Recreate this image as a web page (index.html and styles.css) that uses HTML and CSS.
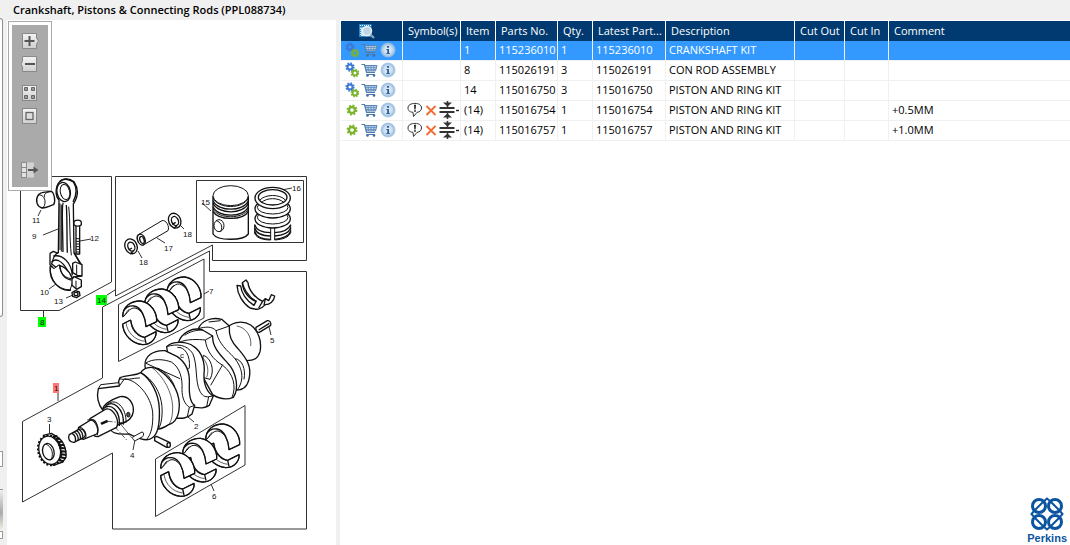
FILE: index.html
```html
<!DOCTYPE html>
<html lang="en">
  <head>
    <meta charset="utf-8">
    <title>Crankshaft, Pistons &amp; Connecting Rods (PPL088734)</title>
    <link rel="stylesheet" href="styles.css">
  </head>
  <body>
    <!-- shared icons -->
    <svg class="defs" width="0" height="0">
      <defs>
        <linearGradient id="key" x1="0" y1="0" x2="0" y2="1">
          <stop offset="0" stop-color="#f4f4f4"/><stop offset="1" stop-color="#cfcfcf"/>
        </linearGradient>
        <radialGradient id="glass">
          <stop offset="0" stop-color="#e4eff8"/><stop offset="0.6" stop-color="#c9def0"/><stop offset="1" stop-color="#8db4da"/>
        </radialGradient>
        <g id="gear">
          <circle r="3" fill="none" stroke-width="2.4"/>
          <circle r="4.6" fill="none" stroke-width="1.8" stroke-dasharray="1.9 1.71"/>
        </g>
        <symbol id="i-gears" viewBox="0 0 14 16">
          <use href="#gear" transform="translate(5 5) scale(0.85)" stroke="#3c78d8"/>
          <use href="#gear" transform="translate(10 11) scale(0.8)" stroke="#7cb32c"/>
        </symbol>
        <symbol id="i-gear" viewBox="0 0 14 16">
          <use href="#gear" transform="translate(7 8)" stroke="#7cb32c"/>
        </symbol>
        <symbol id="i-cart" viewBox="0 0 17 16">
          <path d="M0.5 2.5H3.5L5.5 10.5H14" fill="none" stroke="#4f7cae" stroke-width="1.2"/>
          <path d="M4 3.5H16L14.5 9H5.5Z" fill="#bcd3ea" stroke="#5a86b6"/>
          <path d="M4.5 5.5H15.5M5 7.5H15M7 3.5L7.5 9M10 3.5V9M13 3.5L12.5 9" fill="none" stroke="#5a86b6" stroke-width="0.7"/>
          <path d="M5.5 12.5H14" stroke="#4f7cae"/>
          <circle cx="6.5" cy="13.5" r="1.3" fill="#40709f"/><circle cx="13" cy="13.5" r="1.3" fill="#40709f"/>
        </symbol>
        <symbol id="i-info" viewBox="0 0 16 16">
          <circle cx="8" cy="8" r="7" fill="url(#glass)" stroke="#a4c4e2" stroke-width="0.8"/>
          <path d="M7 4H9V5.8H7ZM6.4 7H9V11H9.8V12H6.4V11H7.2V8H6.4Z" fill="#2e5f9e"/>
        </symbol>
        <symbol id="i-note" viewBox="0 0 16 16">
          <path d="M6 10.3C2 10 1 8 1 6C1 3 4 1.4 8 1.4S14.500 3 14.500 6C14.500 8 13 10 10 10.4L6.5 14.5Z" fill="#fff" stroke="#333"/>
          <path d="M7 2.8H9L8.6 7.4H7.4Z" fill="#222"/><circle cx="8" cy="9" r="0.9" fill="#222"/>
        </symbol>
        <symbol id="i-cross" viewBox="0 0 12 16">
          <path d="M1.5 4L10.5 13M10.5 4L1.5 13" stroke="#f26a2e" stroke-width="1.8" fill="none"/>
        </symbol>
        <symbol id="i-size" viewBox="0 0 20 18">
          <path d="M0.5 7H15.5M0.5 11H15.5" stroke="#333" stroke-width="1.8"/>
          <path d="M4 1.5H13L8.5 5.5ZM4 16.5H13L8.5 12.5Z" fill="#333"/>
          <path d="M8.5 0V7M8.5 11V18" stroke="#333" stroke-width="1.5"/>
          <path d="M17 9.5H20" stroke="#222" stroke-width="1.4"/>
        </symbol>
      </defs>
    </svg>

    <div class="edge">
      <div class="edge-pane"></div>
      <div class="edge-box"></div>
      <div class="edge-button"></div>
      <div class="edge-box"></div>
    </div>

    <main class="main">
      <h1 class="title">Crankshaft, Pistons &amp; Connecting Rods (PPL088734)</h1>
      <div class="content">
        <section class="drawing">
          <div class="toolbar">
            <button type="button" class="tool" aria-label="Zoom in">
              <svg width="18" height="16"><path d="M1.500.5H15.500V5L17.500 8L15.500 11V15.500H1.500Z" fill="url(#key)" stroke="#888"/><path d="M8.500 3V13M3.500 8H13.500" stroke="#555" stroke-width="2"/></svg>
            </button>
            <button type="button" class="tool" aria-label="Zoom out">
              <svg width="18" height="16"><path d="M1.500.5H15.500V15.500H1.500V11L0 8L1.500 5Z" fill="url(#key)" stroke="#888"/><path d="M4 8H14" stroke="#555" stroke-width="2"/></svg>
            </button>
            <button type="button" class="tool tool-gap" aria-label="Tile">
              <svg width="18" height="16"><rect x="1.500" y=".5" width="14" height="15" fill="url(#key)" stroke="#888"/><path d="M3.500 2.500H6.500V5.500H3.500ZM10.500 2.500H13.500V5.500H10.500ZM3.500 10.500H6.500V13.500H3.500ZM10.500 10.500H13.500V13.500H10.500Z" fill="#999" stroke="#666"/></svg>
            </button>
            <button type="button" class="tool" aria-label="Fit">
              <svg width="18" height="16"><rect x="1.500" y=".5" width="14" height="15" fill="url(#key)" stroke="#888"/><rect x="5" y="4.500" width="7" height="7" fill="#ddd" stroke="#666" stroke-width="1.300"/></svg>
            </button>
            <button type="button" class="tool tool-last" aria-label="Show list">
              <svg width="18" height="16"><path d="M.5.5H5.500V15.500H.5ZM.5 5.500H5.500M.5 10.500H5.500" fill="#e2e2e2" stroke="#888"/><path d="M6 .5H13V15.500H6Z" fill="#d2d2d2"/><path d="M7 8H14" stroke="#555" stroke-width="2"/><path d="M12.500 4.500L17.500 8L12.500 11.500Z" fill="#555"/></svg>
            </button>
          </div>

          <svg class="diagram" viewBox="7 20 329 525" role="img" aria-label="Exploded view">
            <g class="frame">
              <path d="M20.500 176.500H111.500V282L59 310.500H20.500ZM43.500 310V318"/>
              <path d="M115.500 176.500H306.500V260.500H212.500V245L115.500 296ZM107 295L115 290"/>
              <path d="M196.500 180.500H303.500V242.500H196.500Z"/>
              <path d="M209.500 251V271.500H306.500V529H112.500V453L22.500 502V421.500L102.500 378V307ZM58 393V401"/>
              <path d="M118.500 304.500L204 259V318L118.500 361.500Z"/>
              <path d="M155.500 459L245 405.500V465L155.500 516.500Z"/>
              <path d="M38 216L41 210M43 235L58 229M80 241L91 239M49 289L56 284M66 298L73 295M202 203L211 211M276 191L292 188M157 238L165 243M179 224L184 229M138 251L142 258M204 294L209 291M269 327L271 335M49.500 424V433M188 417L194 422M135 440L133 450M211 484L214 491"/>
            </g>

            <!-- connecting rod, bush, bolt and nut -->
            <g class="part" transform="translate(0 170) scale(0.33333)">
              <path class="heavy" d="M114 76C120 64 140 67 153 64C162 66 168 93 161 104C148 108 138 115 126 114C111 110 105 92 114 76Z"/>
              <path d="M114 76C122 72 132 78 135 92C136 105 132 112 126 114M153 64C140 66 130 72 134 82"/>
              <path class="heavy" d="M177 90L175 248C160 254 158 270 155 282L168 292C184 276 210 306 215 322L244 318V284L222 248L220 102C235 80 235 55 222 35C205 22 180 24 171 48C166 66 168 80 177 90Z"/>
              <ellipse class="heavy" cx="191" cy="66" rx="20" ry="29" transform="rotate(-12 191 66)"/>
              <ellipse cx="195" cy="66" rx="14" ry="23" transform="rotate(-12 195 66)"/>
              <path class="heavy" d="M180 36C188 24 206 26 220 36C229 50 232 72 219 96"/>
              <path class="heavy" d="M190 98C184 104 188 160 189 246M199 105C202 150 200 200 202 248"/>
              <path d="M184 104V245M206 110C211 150 208 200 214 256M180 100V240"/>
              <path class="heavy" d="M150 250L160 244L174 250M150 250V284L160 294M222 248L242 284M160 258C190 252 214 280 217 316M155 276C166 264 185 270 202 300"/>
              <path d="M150 288C150 326 168 358 210 360L222 326C196 328 180 310 178 284L162 296Z"/>
              <path class="heavy" d="M151 292C146 330 178 366 213 360M180 286C180 310 194 328 214 330"/>
              <path class="heavy" d="M218 280L226 276L246 284V318L232 316L218 308ZM216 328L222 320L244 330V350L230 358L216 346Z"/>
              <path d="M230 284V314M228 332V356"/>
              <path class="heavy" d="M228 160V252H239V160"/>
              <path class="heavy" d="M222 158C222 148 244 148 244 158V164C238 170 228 170 222 164Z"/>
              <path d="M228 206H239M228 214H239M228 222H239M228 230H239M228 238H239M228 246H239"/>
              <path class="heavy" d="M216 368L226 362L238 366L240 376L230 383L218 379Z"/><ellipse class="heavy" cx="228" cy="372" rx="6" ry="5"/>
            </g>

            <!-- piston, rings, pin and circlips -->
            <g class="part" transform="translate(110 170) scale(0.33333)">
              <path class="heavy open" d="M309 78V192C322 213 400 213 415 192V78"/>
              <ellipse cx="362" cy="77" rx="53" ry="30"/>
              <path class="heavy" d="M309 92C325 126 400 126 415 92M309 100C325 134 400 134 415 100M309 110C325 144 400 144 415 110M309 124C325 152 400 152 415 124"/>
              <path d="M309 117C325 148 400 148 415 117M309 84C325 118 400 118 415 84"/>
              <ellipse cx="327" cy="167" rx="15" ry="18"/><path d="M318 152C332 156 340 168 332 184"/>
              <path d="M434 164V190C440 206 464 210 482 210V164M494 164V210C520 208 536 202 542 188V164" class="open"/>
              <path class="heavy open" d="M434 164C440 184 464 188 482 188M494 188C520 186 536 180 542 164M434 174C440 194 464 198 482 198M494 198C520 196 536 190 542 174M434 184C440 204 464 208 482 208M494 208C520 206 536 200 542 184"/>
              <ellipse class="heavy" cx="488" cy="146" rx="53" ry="28"/><ellipse cx="488" cy="142" rx="46" ry="20"/>
              <ellipse class="heavy" cx="488" cy="116" rx="53" ry="28"/><ellipse cx="488" cy="112" rx="46" ry="20"/>
              <ellipse class="heavy" cx="488" cy="84" rx="53" ry="32"/><ellipse class="heavy" cx="488" cy="82" rx="43" ry="23"/>
              <path d="M450 90C466 72 510 72 526 90M454 98C470 82 506 82 522 98" class="open"/>
              <path d="M82 196L156 152C168 148 180 170 174 182L100 225C88 226 78 210 82 196Z"/>
              <ellipse class="heavy" cx="94" cy="209" rx="11" ry="17" transform="rotate(-20 94 209)"/>
              <ellipse class="heavy" cx="96" cy="210" rx="6" ry="11" transform="rotate(-20 96 210)"/>
              <g id="circlip">
                <ellipse class="heavy" cx="63" cy="229" rx="18" ry="23" transform="rotate(-24 63 229)"/>
                <ellipse class="heavy" cx="64" cy="230" rx="10" ry="14" transform="rotate(-24 64 230)"/>
                <path class="heavy" d="M56 240L66 234M60 252L70 244"/>
              </g>
              <use href="#circlip" x="131" y="-77"/>
              <path class="heavy" d="M381 346L392 348C394 368 408 392 432 406L438 394C412 378 400 352 397 338L408 330L414 338C416 362 438 386 458 394L466 386L476 392L484 374L494 378C492 396 478 404 466 404C452 420 440 420 420 414C398 400 382 372 381 346Z"/>
              <path class="heavy" d="M458 394L446 414M466 386L462 406M397 338C398 362 416 388 440 394"/>
              <path class="heavy" d="M438 472L472 452C480 450 484 460 482 466L448 487C440 488 436 478 438 472ZM446 480L478 460"/>
            </g>

            <!-- main bearing halves, farthest pair first -->
            <g class="part" transform="translate(110 170) scale(0.33333)">
              <use href="#shells" x="133" y="-72"/>
              <use href="#shells" x="66" y="-36"/>
              <g id="shells">
                <path d="M38 462L62 450C64 480 80 500 104 502L138 485C142 500 124 526 98 524C60 520 38 490 38 462Z"/>
                <path class="heavy" d="M62 450L38 462C40 494 66 522 98 524C124 524 140 504 138 485L104 502C82 498 66 478 62 450M104 502L108 520"/>
                <path class="thin" d="M48 458C52 488 74 510 104 514"/>
                <path d="M38 440C38 408 64 392 92 393C125 398 142 430 140 455L108 470C106 445 98 420 75 414C58 412 50 434 38 440Z"/>
                <path class="heavy" d="M38 440C38 408 64 392 92 393C125 398 142 430 140 455L108 470C106 440 94 412 72 408C56 406 46 414 40 424"/>
                <path d="M38 440C46 440 48 424 58 418"/>
              </g>
            </g>
            <g class="part" transform="translate(150 340) scale(0.33333)">
              <use href="#shells" x="129" y="-141"/>
              <use href="#shells" x="60" y="-98"/>
              <use href="#shells" x="-6" y="-55"/>
              <path class="heavy" d="M14 292L20 289L60 308L58 320L50 322L14 302Z"/><ellipse class="heavy" cx="56" cy="315" rx="5" ry="7"/>
            </g>

            <!-- crankshaft, rear flange first so that nearer webs cover it -->
            <g class="part" transform="translate(90 310) scale(0.33333)">
              <path class="heavy" d="M412 52C430 34 462 32 482 45C506 62 516 96 510 125C504 146 492 152 470 152L420 120Z"/>
              <path class="thin" d="M440 48C468 52 486 80 482 108"/>
              <path class="heavy" d="M325 56C335 32 365 20 395 28L418 48C416 78 424 96 444 116C472 148 484 170 478 202C474 226 462 240 440 240L360 150Z"/>
              <path d="M325 56C345 50 366 48 378 62C384 92 400 112 424 134C450 160 470 200 442 240M378 62L418 48M436 146C456 150 468 176 462 208M356 36L392 32"/>
              <path class="heavy" d="M265 98C275 68 308 50 338 60L368 78C366 108 386 130 412 158C440 186 448 236 430 262C410 270 386 266 368 254L300 130Z"/>
              <path d="M265 98C290 86 325 88 346 90L368 78M346 90C350 122 368 148 398 166C430 190 440 230 426 262M398 164L362 226M284 76C300 64 320 60 338 60"/>
              <path d="M340 136C362 142 376 180 360 208L330 200Z"/><path class="thin" d="M336 142C352 156 358 180 350 202"/>
              <path class="heavy" d="M230 110C248 92 292 94 312 110C336 126 346 160 342 192C340 226 354 250 370 258L358 286C342 296 330 294 312 292L240 180Z"/>
              <path d="M230 110C262 100 290 104 308 130C324 166 314 214 330 244C336 256 344 262 356 260L370 258M356 260L350 290M262 112C284 110 302 136 298 174C290 184 278 182 270 170"/>
              <path class="heavy" d="M165 168C163 138 190 120 225 122L262 140C288 158 300 188 298 222C297 252 300 278 314 286L306 312C290 326 276 326 256 324L170 200Z"/>
              <path d="M166 160C190 144 222 148 244 156C270 172 278 206 276 238C276 264 284 282 298 292L314 286M298 292L292 320M168 160L270 206M202 174C228 184 246 208 254 230"/>
              <path class="heavy" d="M152 190C158 174 182 166 204 178C240 200 266 240 268 282C268 318 256 338 236 344C224 352 212 360 196 356L150 260Z"/>
              <path class="thin" d="M186 172C222 202 246 246 248 290C248 318 244 334 236 344"/>
              <path d="M154 188C190 210 212 246 216 290C218 326 212 348 204 358"/>
              <path class="heavy" d="M25 236L88 228L86 214L90 203C112 194 136 198 152 188C182 206 206 250 208 296C210 346 202 374 186 384C172 394 156 390 134 380L118 372C90 374 64 372 60 355L38 300C24 282 20 258 25 236Z"/>
              <path d="M88 228L104 206C146 212 182 260 188 306C190 346 184 372 170 388M88 206C110 212 126 204 150 204M25 236L32 224L86 218"/>
              <path class="heavy" d="M38 298C40 284 62 270 90 260C116 256 132 280 130 304C128 326 112 336 90 342L62 352Z"/>
              <path class="heavy" d="M46 290C66 264 104 296 100 344M38 298C60 274 92 300 88 348"/>
              <path d="M54 282C76 262 110 292 108 338"/>
              <ellipse class="dark" cx="115" cy="314" rx="5" ry="7"/>
              <path class="thin" d="M90 340L126 384"/>
              <path d="M130 380L156 366C162 366 162 376 158 380L136 392C128 390 126 384 130 380Z"/>
            </g>
            <g class="part" transform="translate(0 340) scale(0.33333)">
              <path class="heavy" d="M270 236L318 207C340 204 360 240 350 262L294 290C272 290 262 256 270 236Z"/>
              <path class="heavy" d="M236 262L272 240C288 234 300 270 290 282L250 298C236 296 230 276 236 262Z"/>
              <path d="M262 240C282 234 298 262 292 286M234 264C248 256 264 280 256 296"/>
              <path class="heavy" d="M208 284L236 268C250 262 262 284 252 292L222 307C208 308 202 294 208 284Z"/>
              <path class="heavy" d="M222 276C230 280 236 290 234 302M229 272C238 276 243 288 241 298M236 268C245 272 250 284 248 295M216 280C223 284 228 294 226 304"/>
              <path class="heavy" d="M302 250L322 241M304 253L324 244"/>
              <path class="thin" d="M324 244L366 248M346 262L380 300" stroke-dasharray="14 5 4 5"/>
              <path class="heavy" d="M130 286L154 280L170 290C188 300 200 324 198 352L188 366L160 376Z"/>
              <ellipse class="teeth" cx="149" cy="331" rx="34" ry="45" transform="rotate(-14 149 331)"/>
              <ellipse class="heavy" cx="149" cy="331" rx="32" ry="43" transform="rotate(-14 149 331)"/>
              <path class="gear-side" d="M158 290L172 288M166 297L180 296M171 306L187 305M175 315L193 315M178 324L196 325M180 333L199 335M180 342L199 345M180 352L197 355M177 361L191 364"/>
              <ellipse class="heavy" cx="145" cy="335" rx="17" ry="25" transform="rotate(-14 145 335)"/>
              <path d="M138 312C154 320 162 338 154 358"/>
            </g>

            <g class="marks">
              <rect x="38" y="317" width="8" height="10" fill="#0f0"/>
              <rect x="96" y="295" width="11" height="10" fill="#0f0"/>
              <rect x="53" y="383" width="6" height="10" fill="#ff7676"/>
            </g>
            <g class="callouts">
              <text x="32" y="223">11</text><text x="32" y="239">9</text><text x="90" y="241">12</text>
              <text x="40" y="295">10</text><text x="54" y="304">13</text><text x="201" y="205">15</text>
              <text x="292" y="191">16</text><text x="164" y="251">17</text><text x="183" y="237">18</text>
              <text x="139" y="265">18</text><text x="209" y="294">7</text><text x="270" y="343">5</text>
              <text x="47" y="422">3</text><text x="194" y="429">2</text><text x="130" y="458">4</text>
              <text x="212" y="499">6</text><text x="180" y="358">c</text>
              <text x="40" y="325">8</text><text x="97" y="303">14</text><text x="54" y="391">1</text>
            </g>
          </svg>
        </section>

        <section class="parts">
          <table class="list">
            <colgroup>
              <col class="c-tools"><col class="c-symbols"><col class="c-item"><col class="c-number"><col class="c-qty">
              <col class="c-latest"><col class="c-desc"><col class="c-out"><col class="c-in"><col>
            </colgroup>
            <thead>
              <tr>
                <th class="search">
                  <svg width="18" height="16" viewBox="0 0 18 16" aria-label="Search"><path d="M1 1H13.500V14H1Z" fill="#2a86c8"/><path d="M2 4.500H12.500V13H2Z" fill="#c9e4f5"/><path d="M2 2.500H13" stroke="#fff" stroke-dasharray="1 1"/><path d="M2.500 6V13" stroke="#2a86c8" stroke-dasharray="1 1"/><circle cx="9" cy="8" r="4.500" fill="#bcd6e8" stroke="#e8eef2" stroke-width="1.500"/><path d="M12.500 11.500L16 15" stroke="#8aa6bd" stroke-width="2.200"/></svg>
                </th>
                <th>Symbol(s)</th><th>Item</th><th>Parts No.</th><th>Qty.</th><th>Latest Part...</th>
                <th>Description</th><th>Cut Out</th><th>Cut In</th><th>Comment</th>
              </tr>
            </thead>
            <tbody>
              <tr class="selected">
                <td>
                  <div class="icons">
                    <button type="button" aria-label="Kit"><svg width="14" height="16"><use href="#i-gears"/></svg></button>
                    <button type="button" aria-label="Add to cart"><svg width="17" height="16"><use href="#i-cart"/></svg></button>
                    <button type="button" aria-label="Info"><svg width="16" height="16"><use href="#i-info"/></svg></button>
                  </div>
                </td>
                <td></td><td>1</td><td>115236010</td><td>1</td><td>115236010</td><td>CRANKSHAFT KIT</td><td></td><td></td><td></td>
              </tr>
              <tr>
                <td>
                  <div class="icons">
                    <button type="button" aria-label="Kit"><svg width="14" height="16"><use href="#i-gears"/></svg></button>
                    <button type="button" aria-label="Add to cart"><svg width="17" height="16"><use href="#i-cart"/></svg></button>
                    <button type="button" aria-label="Info"><svg width="16" height="16"><use href="#i-info"/></svg></button>
                  </div>
                </td>
                <td></td><td>8</td><td>115026191</td><td>3</td><td>115026191</td><td>CON ROD ASSEMBLY</td><td></td><td></td><td></td>
              </tr>
              <tr>
                <td>
                  <div class="icons">
                    <button type="button" aria-label="Kit"><svg width="14" height="16"><use href="#i-gears"/></svg></button>
                    <button type="button" aria-label="Add to cart"><svg width="17" height="16"><use href="#i-cart"/></svg></button>
                    <button type="button" aria-label="Info"><svg width="16" height="16"><use href="#i-info"/></svg></button>
                  </div>
                </td>
                <td></td><td>14</td><td>115016750</td><td>3</td><td>115016750</td><td>PISTON AND RING KIT</td><td></td><td></td><td></td>
              </tr>
              <tr>
                <td>
                  <div class="icons">
                    <button type="button" aria-label="Part"><svg width="14" height="16"><use href="#i-gear"/></svg></button>
                    <button type="button" aria-label="Add to cart"><svg width="17" height="16"><use href="#i-cart"/></svg></button>
                    <button type="button" aria-label="Info"><svg width="16" height="16"><use href="#i-info"/></svg></button>
                  </div>
                </td>
                <td>
                  <div class="icons symbols">
                    <svg width="16" height="16"><use href="#i-note"/></svg><svg width="12" height="16"><use href="#i-cross"/></svg><svg width="20" height="18"><use href="#i-size"/></svg>
                  </div>
                </td>
                <td>(14)</td><td>115016754</td><td>1</td><td>115016754</td><td>PISTON AND RING KIT</td><td></td><td></td><td>+0.5MM</td>
              </tr>
              <tr>
                <td>
                  <div class="icons">
                    <button type="button" aria-label="Part"><svg width="14" height="16"><use href="#i-gear"/></svg></button>
                    <button type="button" aria-label="Add to cart"><svg width="17" height="16"><use href="#i-cart"/></svg></button>
                    <button type="button" aria-label="Info"><svg width="16" height="16"><use href="#i-info"/></svg></button>
                  </div>
                </td>
                <td>
                  <div class="icons symbols">
                    <svg width="16" height="16"><use href="#i-note"/></svg><svg width="12" height="16"><use href="#i-cross"/></svg><svg width="20" height="18"><use href="#i-size"/></svg>
                  </div>
                </td>
                <td>(14)</td><td>115016757</td><td>1</td><td>115016757</td><td>PISTON AND RING KIT</td><td></td><td></td><td>+1.0MM</td>
              </tr>
            </tbody>
          </table>
          <div class="brand">
            <svg width="34" height="34" viewBox="0 0 34 34" fill="none" stroke="#0b55a0" stroke-width="3">
              <circle cx="9" cy="9" r="6.500"/><circle cx="25" cy="9" r="6.500"/><circle cx="9" cy="25" r="6.500"/><circle cx="25" cy="25" r="6.500"/>
              <path d="M4.500 13.500L13.500 4.500L17 1.500L20.500 4.500L29.500 13.500L32.500 17L29.500 20.500L20.500 29.500L17 32.500L13.500 29.500L4.500 20.500L1.500 17Z" stroke-width="2"/>
            </svg>
            <span class="brand-name">Perkins</span>
          </div>
        </section>
      </div>
    </main>
  </body>
</html>
```

FILE: styles.css
```css
* {
  box-sizing: border-box;
}
body {
  margin: 0;
  min-height: 100vh;
  display: flex;
  background: #f0f0f0;
  color: #000;
  font: 11px/20px "Open Sans", "Segoe UI", sans-serif;
  overflow: hidden;
}
.defs {
  position: absolute;
}
button {
  padding: 0;
  border: 0;
  background: none;
  cursor: pointer;
}
svg {
  display: block;
}

/* strip of the neighbouring pane */
.edge {
  flex: 0 0 7px;
  padding: 18px 4px 0 0;
  display: flex;
  flex-direction: column;
}
.edge-pane {
  height: 299px;
  background: #fff;
  border: solid #8b8f98;
  border-width: 1px 1px 1px 0;
  border-radius: 0 3px 3px 0;
}
.edge-box {
  height: 16px;
  margin-top: 134px;
  background: #fff;
  border: solid #999;
  border-width: 1px 1px 1px 0;
}
.edge-button {
  height: 42px;
  margin-top: 22px;
  border-top: 1px solid #999;
  background: linear-gradient(#eee, #aaa 55%, #f4f4e8);
}
.edge-button + .edge-box {
  height: 8px;
  margin-top: 0;
}

.main {
  flex: 1;
  min-width: 0;
  display: flex;
  flex-direction: column;
}
.title {
  margin: 0;
  padding-left: 6px;
  font-size: 11px;
  line-height: 20px;
  font-weight: 600;
}
.content {
  flex: 1;
  display: flex;
  gap: 4px;
}
.drawing {
  position: relative;
  flex: 0 0 329px;
  background: #fff;
}
.diagram {
  width: 100%;
}
.toolbar {
  position: absolute;
  top: 1px;
  left: 1px;
  width: 44px;
  height: 170px;
  padding: 11px 9px 9px;
  display: flex;
  flex-direction: column;
  align-items: center;
  gap: 7px;
  background: #aaa;
  border: 1px solid #aaa;
  box-shadow: inset 0 0 0 3px #fff;
}
.tool-gap {
  margin-top: 6px;
}
.tool-last {
  margin-top: auto;
  margin-bottom: 3px;
}

/* exploded view */
.frame {
  fill: none;
  stroke: #333;
  stroke-width: 1;
}
.part {
  fill: #fff;
  stroke: #111;
  stroke-width: 3;
  stroke-linejoin: round;
}
.part .heavy {
  stroke-width: 4;
}
.part .thin {
  stroke-width: 2;
  fill: none;
}
.part .open,
.part path:not([d$="Z"]) {
  fill: none;
}
.part .dark {
  fill: #555;
}
.part .teeth {
  stroke-width: 7;
  stroke-dasharray: 6 5;
}
.part .gear-side {
  stroke-width: 6;
}
.callouts {
  font: 8px "Liberation Sans", Arial, sans-serif;
  fill: #111;
}

/* parts list */
.parts {
  flex: 1;
  min-width: 0;
  padding: 1px 0 0 1px;
  background: #fff;
  display: flex;
  flex-direction: column;
  justify-content: space-between;
}
.list {
  width: 100%;
  table-layout: fixed;
  border-collapse: separate;
  border-spacing: 0;
}
.c-tools,
.c-number {
  width: 62px;
}
.c-symbols {
  width: 58px;
}
.c-item,
.c-qty {
  width: 35px;
}
.c-latest {
  width: 73px;
}
.c-desc {
  width: 129px;
}
.c-out {
  width: 50px;
}
.c-in {
  width: 44px;
}
.list th,
.list td {
  height: 20px;
  padding: 0 0 0 3px;
  line-height: 18px;
  text-align: left;
  vertical-align: top;
  white-space: nowrap;
  border-right: 1px solid #f0f0f0;
}
.list th {
  padding-left: 5px;
  color: #fff;
  font-weight: normal;
  line-height: 20px;
  vertical-align: middle;
  background: #003a70;
  border-color: #fff;
}
.list th:last-child,
.list td:last-child {
  border-right: 0;
}
.list td {
  border-bottom: 1px solid #f0f0f0;
}
.list .search {
  padding-left: 17px;
}
.list .selected td {
  color: #fff;
  background: #3399ff;
}
.icons {
  display: flex;
  align-items: center;
  gap: 2px;
  height: 18px;
  padding-left: 1px;
}
.symbols {
  padding-left: 1px;
}
.brand {
  align-self: flex-end;
  display: flex;
  flex-direction: column;
  align-items: center;
  gap: 1px;
  padding: 0 3px 1px 0;
  color: #0b55a0;
}
.brand-name {
  font: bold 11px/12px "Liberation Sans", Arial, sans-serif;
}
```
